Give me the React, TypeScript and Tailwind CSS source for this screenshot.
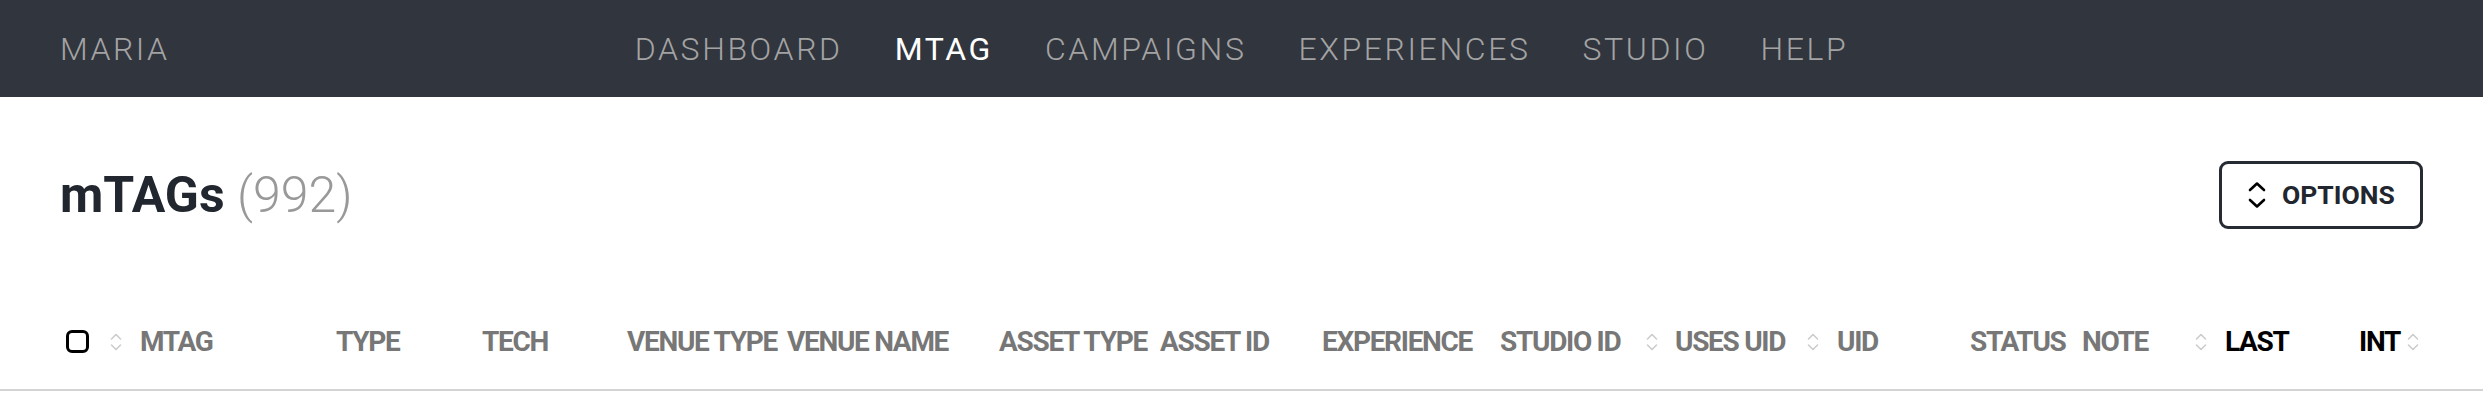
import React from 'react';

const navItems = ['DASHBOARD', 'MTAG', 'CAMPAIGNS', 'EXPERIENCES', 'STUDIO', 'HELP'];

const SortIcon = ({ className = '' }: { className?: string }) => (
  <svg className={className} width="14" height="22" viewBox="0 0 14 22" fill="none">
    <path d="M2.5 8 L7 3.5 L11.5 8" stroke="#cccccc" strokeWidth="1.6" strokeLinecap="round" strokeLinejoin="round" />
    <path d="M2.5 14 L7 18.5 L11.5 14" stroke="#cccccc" strokeWidth="1.6" strokeLinecap="round" strokeLinejoin="round" />
  </svg>
);

export default function App() {
  return (
    <div className="w-[2483px] min-h-[411px] bg-white font-['Roboto',sans-serif]">
      {/* Top nav */}
      <div className="relative flex h-[97px] items-center bg-[#31353e] px-[60px]">
        <span className="text-[32px] font-light tracking-[2.5px] text-[#a3a3a3]">MARIA</span>
        <nav className="absolute left-1/2 top-0 flex h-full -translate-x-1/2 items-center gap-[52px]">
          {navItems.map((item) => (
            <span
              key={item}
              className={`text-[32px] tracking-[2.6px] ${item === 'MTAG' ? 'font-normal text-white' : 'font-light text-[#a3a3a3]'}`}
            >
              {item}
            </span>
          ))}
        </nav>
      </div>

      {/* Title row */}
      <div className="mt-[64px] flex items-center justify-between px-[60px]">
        <h1 className="text-[50px] leading-none text-[#22262e]">
          <span className="font-bold">mTAGs</span>{' '}
          <span className="font-light text-[#999999]">(992)</span>
        </h1>
        <button className="flex h-[68px] w-[204px] items-center gap-[15px] rounded-[9px] border-[3px] border-[#262a32] pl-[25px]">
          <svg width="20" height="30" viewBox="0 0 20 30" fill="none">
            <path d="M3 10 L10 3.5 L17 10" stroke="#000" strokeWidth="2.6" strokeLinecap="round" strokeLinejoin="round" />
            <path d="M3 20 L10 26.5 L17 20" stroke="#000" strokeWidth="2.6" strokeLinecap="round" strokeLinejoin="round" />
          </svg>
          <span className="text-[26.5px] font-bold text-[#22262e]">OPTIONS</span>
        </button>
      </div>

      {/* Table header */}
      <div className="mt-[62px] flex h-[100px] items-center border-b-2 border-[#d4d4d4] pl-[66px] pr-[63px] pt-[3px] text-[28px] font-bold tracking-[-1.3px] text-[#777777]">
        <div className="w-[38px] shrink-0">
          <div className="h-[23px] w-[23px] rounded-[6px] border-[3px] border-black" />
        </div>
        <div className="flex w-[232px] shrink-0 items-center">
          <SortIcon className="ml-[5px] mr-[17px]" />
          <span>MTAG</span>
        </div>
        <div className="w-[146px] shrink-0">TYPE</div>
        <div className="w-[145px] shrink-0">TECH</div>
        <div className="w-[160px] shrink-0">VENUE TYPE</div>
        <div className="w-[212px] shrink-0">VENUE NAME</div>
        <div className="w-[161px] shrink-0">ASSET TYPE</div>
        <div className="w-[162px] shrink-0">ASSET ID</div>
        <div className="w-[178px] shrink-0">EXPERIENCE</div>
        <div className="w-[140px] shrink-0">STUDIO ID</div>
        <div className="flex w-[161px] shrink-0 items-center">
          <SortIcon className="ml-[5px] mr-[16px]" />
          <span>USES UID</span>
        </div>
        <div className="flex w-[169px] shrink-0 items-center">
          <SortIcon className="ml-[5px] mr-[17px]" />
          <span>UID</span>
        </div>
        <div className="w-[112px] shrink-0">STATUS</div>
        <div className="w-[107px] shrink-0">NOTE</div>
        <div className="flex shrink-0 items-center text-black">
          <SortIcon className="ml-[5px] mr-[17px]" />
          <span>LAST</span>
        </div>
        <div className="flex flex-1 items-center justify-end text-black">
          <span>INT</span>
          <SortIcon className="ml-[6px]" />
        </div>
      </div>
    </div>
  );
}
